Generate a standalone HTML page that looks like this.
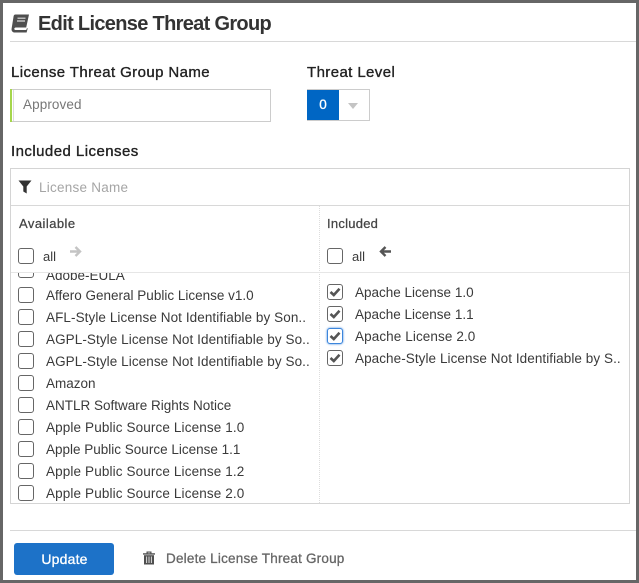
<!DOCTYPE html>
<html><head><meta charset="utf-8"><style>
html,body{margin:0;padding:0;width:639px;height:583px;overflow:hidden;background:#fff}
body{font-family:"Liberation Sans",sans-serif;position:relative}
.a{position:absolute;white-space:nowrap}
.t{position:absolute;white-space:nowrap;color:#3a3a3a;font-size:13.5px;line-height:16px}
.p{letter-spacing:.13px}
.q{letter-spacing:.08px}
.b{position:absolute;background:#d8d8d8}
.c{position:absolute;width:14px;height:14px;border:1px solid #666;border-radius:3px;background:#fff}
.c svg{position:absolute;left:0;top:0}
.h{position:absolute;white-space:nowrap;color:#222;font-size:15px;line-height:18px;-webkit-text-stroke:.35px #222;letter-spacing:.4px}
</style></head><body>
<div class="a" style="left:0;top:0;width:633px;height:577px;border:3px solid #666"></div>
<svg class="a" style="left:11px;top:14px" width="19" height="19" viewBox="0 0 19 19"><path d="M4.5 .5H18L15.2 13.5H4.8C3.8 13.5 3.2 14.2 3.3 15C3.4 15.7 4 16 4.8 16H15.3L15.7 14.6L16.8 14L15.6 18.5H3.8C1.6 18.5 .2 16.8 .6 14.6L2.6 2.2C2.8 1.1 3.5 .5 4.5 .5Z" fill="#4f4f4f"/><path d="M6.5 4.2H14.5M6 7H14" stroke="#ddd" stroke-width="1.2"/></svg>
<div class="a" style="left:38px;top:12px;font-size:20px;line-height:24px;font-weight:bold;color:#333;letter-spacing:-.68px">Edit License Threat Group</div>
<div class="b" style="left:10px;top:41px;width:626px;height:1px"></div>

<div class="h" style="left:11px;top:64px">License Threat Group Name</div>
<div class="a" style="left:10px;top:89px;width:259px;height:31px;border:1px solid #ccc;background:#fff"></div>
<div class="a" style="left:10px;top:89px;width:2px;height:33px;background:#a5d64c"></div>
<div class="a" style="left:13px;top:90px;width:1px;height:31px;background:#ddd"></div>
<div class="a" style="left:23px;top:97px;font-size:13.5px;line-height:16px;color:#777;letter-spacing:.1px">Approved</div>

<div class="h" style="left:307px;top:64px">Threat Level</div>
<div class="a" style="left:307px;top:89px;width:61px;height:30px;border:1px solid #ccc;background:#fff"></div>
<div class="a" style="left:307px;top:90px;width:32px;height:30px;background:#0066c4;color:#fff;font-size:13.5px;-webkit-text-stroke:.3px #fff;line-height:29px;text-align:center">0</div>
<div class="a" style="left:348px;top:103px;width:0;height:0;border-left:5px solid transparent;border-right:5px solid transparent;border-top:6px solid #c4c4c4"></div>

<div class="h" style="left:11px;top:143px;letter-spacing:.45px">Included Licenses</div>

<div class="a" style="left:10px;top:168px;width:618px;height:334px;border:1px solid #d4d4d4;background:#fff"></div>
<div class="b" style="left:11px;top:205px;width:618px;height:1px"></div>
<svg class="a" style="left:18px;top:180px" width="14" height="14" viewBox="0 0 14 14"><path d="M.5 .5H13.5L8.7 6.5V13.5L5.3 11.5V6.5Z" fill="#333"/></svg>
<div class="a" style="left:39px;top:180px;font-size:13.5px;line-height:16px;color:#a5a5a5;letter-spacing:.25px">License Name</div>

<div class="a" style="left:319px;top:206px;width:0;height:297px;border-left:1px dotted #ddd"></div>

<div class="t" style="left:19px;top:216px;font-size:13px;-webkit-text-stroke:.25px #444;color:#444;letter-spacing:.45px">Available</div>
<div class="t" style="left:327px;top:216px;font-size:13px;-webkit-text-stroke:.25px #444;color:#444;letter-spacing:.25px">Included</div>
<div class="c" style="left:18px;top:248px"></div>
<div class="t" style="left:43px;top:249px;font-size:13px">all</div>
<svg class="a" style="left:69px;top:245px" width="13" height="13" viewBox="0 0 13 13"><path d="M1 6.5H10M6.5 2L11 6.5L6.5 11" fill="none" stroke="#c4c4c4" stroke-width="2.4"/></svg>
<div class="c" style="left:327px;top:248px"></div>
<div class="t" style="left:352px;top:249px;font-size:13px">all</div>
<svg class="a" style="left:379px;top:245px" width="13" height="13" viewBox="0 0 13 13"><path d="M12 6.5H3M6.5 2L2 6.5L6.5 11" fill="none" stroke="#555" stroke-width="2.4"/></svg>
<div class="b" style="left:11px;top:272px;width:618px;height:1px;background:#e6e6e6"></div>

<div class="a" style="left:11px;top:273px;width:308px;height:229px;overflow:hidden">
<div class="c" style="left:7px;top:-11px"></div><div class="t" style="left:35px;top:-5px">Adobe-EULA</div>
<div class="c" style="left:7px;top:14px"></div><div class="t" style="left:35px;top:15px">Affero General Public License v1.0</div>
<div class="c" style="left:7px;top:36px"></div><div class="t q" style="left:35px;top:37px">AFL-Style License Not Identifiable by Son..</div>
<div class="c" style="left:7px;top:58px"></div><div class="t q" style="left:35px;top:59px">AGPL-Style License Not Identifiable by So..</div>
<div class="c" style="left:7px;top:80px"></div><div class="t q" style="left:35px;top:81px">AGPL-Style License Not Identifiable by So..</div>
<div class="c" style="left:7px;top:102px"></div><div class="t" style="left:35px;top:103px">Amazon</div>
<div class="c" style="left:7px;top:124px"></div><div class="t" style="left:35px;top:125px">ANTLR Software Rights Notice</div>
<div class="c" style="left:7px;top:146px"></div><div class="t p" style="left:35px;top:147px">Apple Public Source License 1.0</div>
<div class="c" style="left:7px;top:168px"></div><div class="t" style="left:35px;top:169px">Apple Public Source License 1.1</div>
<div class="c" style="left:7px;top:190px"></div><div class="t p" style="left:35px;top:191px">Apple Public Source License 1.2</div>
<div class="c" style="left:7px;top:212px"></div><div class="t p" style="left:35px;top:213px">Apple Public Source License 2.0</div>
</div>

<div class="c" style="left:327px;top:284px"><svg width="14" height="14" viewBox="0 0 14 14"><path d="M2.5 7L5.8 10L11.5 3.8" fill="none" stroke="#555" stroke-width="2.6"/></svg></div>
<div class="t" style="left:355px;top:285px">Apache License 1.0</div>
<div class="c" style="left:327px;top:306px"><svg width="14" height="14" viewBox="0 0 14 14"><path d="M2.5 7L5.8 10L11.5 3.8" fill="none" stroke="#555" stroke-width="2.6"/></svg></div>
<div class="t" style="left:355px;top:307px">Apache License 1.1</div>
<div class="c" style="left:327px;top:328px;border-color:#3d86dc;box-shadow:0 0 2px #3d86dc"><svg width="14" height="14" viewBox="0 0 14 14"><path d="M2.5 7L5.8 10L11.5 3.8" fill="none" stroke="#555" stroke-width="2.6"/></svg></div>
<div class="t" style="left:355px;top:329px;letter-spacing:.1px">Apache License 2.0</div>
<div class="c" style="left:327px;top:350px"><svg width="14" height="14" viewBox="0 0 14 14"><path d="M2.5 7L5.8 10L11.5 3.8" fill="none" stroke="#555" stroke-width="2.6"/></svg></div>
<div class="t" style="left:355px;top:351px;letter-spacing:.07px">Apache-Style License Not Identifiable by S..</div>

<div class="b" style="left:10px;top:530px;width:626px;height:1px"></div>
<div class="a" style="left:15px;top:543px;width:99px;height:32px;border-radius:3px;background:#1d72c8;color:#fff;font-size:14px;-webkit-text-stroke:.3px #fff;line-height:32px;text-align:center;letter-spacing:.2px;margin-left:-1px;padding-left:1px">Update</div>
<svg class="a" style="left:143px;top:551px" width="12" height="14" viewBox="0 0 12 14"><path d="M0 2.2H3.5V.5H8.5V2.2H12V3.6H0ZM4.7 2.2H7.3V1.6H4.7Z" fill="#4f4f4f" fill-rule="evenodd"/><path d="M1 4.2H11V13.5H1Z" fill="#4f4f4f"/><path d="M3.6 5.5V12M6 5.5V12M8.4 5.5V12" stroke="#ddd" stroke-width="1"/></svg>
<div class="a" style="left:166px;top:551px;font-size:13.5px;line-height:16px;color:#666;-webkit-text-stroke:.3px #666;letter-spacing:.2px">Delete License Threat Group</div>
</body></html>
